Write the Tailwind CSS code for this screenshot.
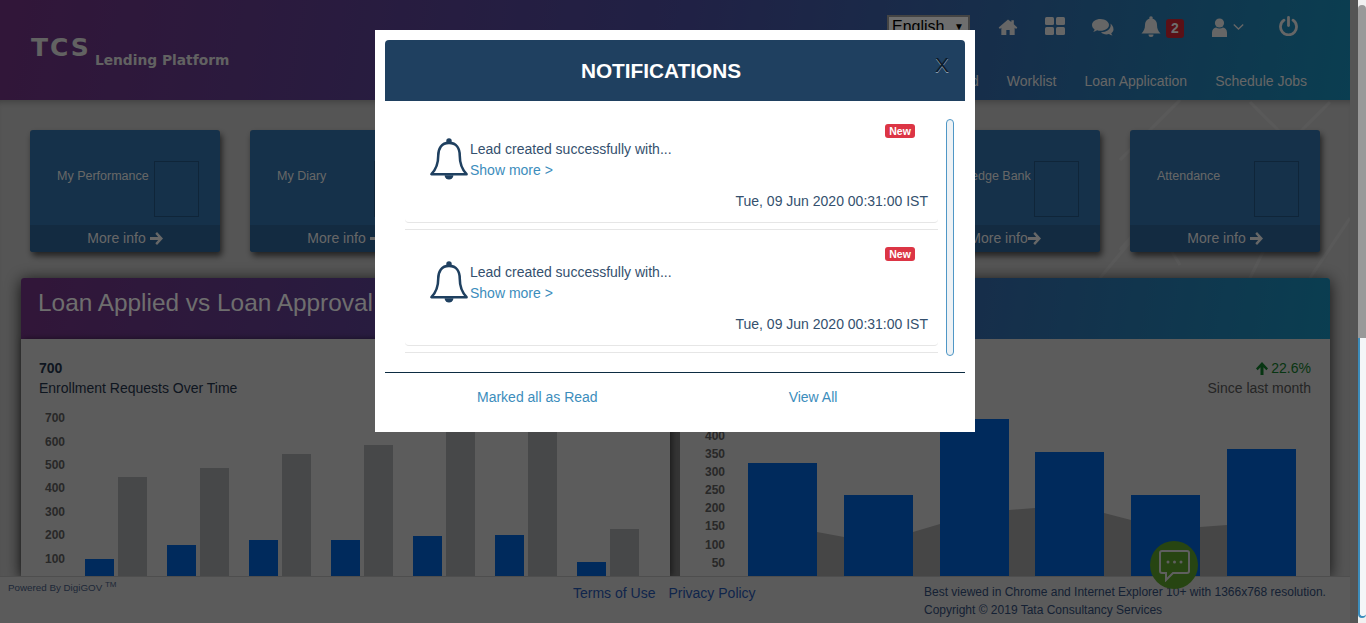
<!DOCTYPE html>
<html lang="en">
<head>
  <meta charset="UTF-8" />
  <title>Lending Platform</title>
  <script src="https://cdn.jsdelivr.net/npm/@tailwindcss/browser@4"></script>
</head>
<body class="font-['Liberation_Sans',Arial,sans-serif] text-sm overflow-hidden">
<div class="relative w-[1366px] h-[623px] overflow-hidden flex bg-[#f1f1f1]">

  <!-- Page -->
  <div class="w-[1358px] h-[623px] overflow-hidden shrink-0 bg-[#aaaaaa]">
    <div class="w-[1350px]">

      <!-- Header -->
      <header class="h-[100px] flex justify-between bg-[linear-gradient(100deg,#632c72,#41428a_50%,#157ca2)] text-[#cccccc]">
        <div class="pl-[31px] pt-[34px] flex items-start font-['DejaVu_Sans',sans-serif] font-bold text-[#c4c4c4]">
          <span class="text-[25px] leading-[28px] tracking-[2px]">TCS</span>
          <span class="text-[13.8px] leading-[16px] ml-[4px] mt-[18px]">Lending Platform</span>
        </div>
        <div class="w-[480px] pt-[15px] relative">
          <div class="flex items-start h-[46px]">
            <div class="ml-[17px] w-[83px] h-[26px] bg-[#dddddd] border-2 border-[#888888] text-[16px] leading-[20px] text-black pl-[3px] flex justify-between pr-[4px]">English <span class="text-[10px]">▼</span></div>
            <svg class="ml-[28px] mt-[2px] w-[20px] h-[20px]" viewBox="0 0 24 24" fill="currentColor"><path d="M12 3 .8 12.6l1.5 1.7L4 13v8.5h6v-6h4v6h6V13l1.7 1.3 1.5-1.7L19 8.6V4h-3v2z"/></svg>
            <svg class="ml-[27px] mt-[1px] w-[20px] h-[20px]" viewBox="0 0 20 20" fill="currentColor"><rect x="0" y="1" width="9" height="8" rx="1.5"/><rect x="11" y="1" width="9" height="8" rx="1.5"/><rect x="0" y="11" width="9" height="8" rx="1.5"/><rect x="11" y="11" width="9" height="8" rx="1.5"/></svg>
            <svg class="ml-[27px] mt-[2px] w-[22px] h-[20px]" viewBox="0 0 22 20" fill="currentColor"><path d="M8.500 2C3.800 2 0 4.600 0 8c0 1.800 1 3.300 2.600 4.400-.3 1-.9 1.900-1.600 2.600 1.600-.2 3-.8 4.100-1.700 1.100.4 2.200.5 3.400.5 4.700 0 8.500-2.600 8.500-5.800S13.200 2 8.500 2z"/><path d="M18.200 6.300c.4.600.5 1.200.5 1.900 0 4-4.300 6.900-9.700 7 1.200 1.300 3.200 2.200 5.500 2.200.9 0 1.700-.1 2.500-.4.9.8 2.200 1.300 3.500 1.500-.6-.7-1-1.500-1.300-2.300 1.400-1 2.300-2.300 2.300-3.800 0-2.500-1.400-4.600-3.300-5.900z"/></svg>
            <svg class="ml-[27px] mt-[1px] w-[20px] h-[22px]" viewBox="0 0 20 22" fill="currentColor"><circle cx="10" cy="2" r="1.800"/><path d="M10 2.500c-4 0-6 3-6 6.500 0 4-1.300 6-3.500 8.500h19C17.300 15 16 13 16 9c0-3.500-2-6.500-6-6.500z"/><path d="M7.500 18.500a2.500 2.500 0 0 0 5 0z"/></svg>
            <div class="ml-[5px] mt-[4px] w-[18px] h-[19px] rounded-[3px] bg-[#b4202c] text-[#dddddd] font-bold text-[14px] leading-[19px] text-center">2</div>
            <svg class="ml-[28px] mt-[3px] w-[15px] h-[19px]" viewBox="0 0 15 19" fill="currentColor"><circle cx="7.500" cy="5" r="4.600"/><path d="M0 19v-4.500C0 11.500 2 10 4 9.500c2 1.300 5 1.300 7 0 2 .5 4 2 4 5V19z"/></svg>
            <svg class="ml-[6px] mt-[8px] w-[11px] h-[8px]" viewBox="0 0 11 8" fill="none" stroke="currentColor" stroke-width="1.300"><path d="M.8 1.500 5.500 6l4.700-4.500"/></svg>
            <svg class="ml-[35px] mt-[1px] w-[19px] h-[20px]" viewBox="0 0 19 20" fill="none" stroke="currentColor" stroke-width="2.800" stroke-linecap="round"><path d="M9.500 1.500v8"/><path d="M5 4.200a8 8 0 1 0 9 0"/></svg>
          </div>
          <nav class="flex justify-end gap-[28px] pr-[43px] mt-[12px] text-[14px] leading-[16px]">
            <span>Dashboard</span><span>Worklist</span><span>Loan Application</span><span>Schedule Jobs</span>
          </nav>
        </div>
      </header>

      <!-- Page body -->
      <main class="relative h-[523px] bg-[#ababab] shadow-[inset_0_6px_6px_-4px_rgba(0,0,0,0.25)]">
        <svg class="absolute left-[1060px] top-0 w-[290px] h-[180px] text-white/10" viewBox="0 0 290 180" fill="none" stroke="currentColor" stroke-width="3"><path d="M120 0 60 60M190 2l40 40 40-40M60 150l30-35 30 50M40 178l50-60M190 178l30-60M250 178l40-60"/></svg>

        <!-- Tiles -->
        <div class="relative flex gap-[30px] pl-[30px] pt-[30px]">
          <div class="w-[190px] h-[122px] rounded-[3px] bg-[#2a6394] shadow-[2px_4px_6px_rgba(0,0,0,0.6)] flex flex-col text-[#cfcfcf]">
            <div class="flex-1 flex justify-between pl-[27px] pr-[21px]"><span class="text-[12.500px] leading-[16px] mt-[38px] whitespace-nowrap">My Performance</span><div class="w-[45px] h-[56px] mt-[31px] border border-[#1e4a72]"></div></div>
            <div class="h-[27px] rounded-b-[3px] bg-[#265682] text-[14px] leading-[27px] flex justify-center items-center gap-[4px]">More info
              <svg class="w-[13px] h-[13px]" viewBox="0 0 13 13" fill="currentColor"><path d="M7 0 13 6.500 7 13 5.300 11.300 8.200 8H0V5h8.200L5.300 1.700z"/></svg></div>
          </div>
          <div class="w-[190px] h-[122px] rounded-[3px] bg-[#2a6394] shadow-[2px_4px_6px_rgba(0,0,0,0.6)] flex flex-col text-[#cfcfcf]">
            <div class="flex-1 flex justify-between pl-[27px] pr-[21px]"><span class="text-[12.500px] leading-[16px] mt-[38px] whitespace-nowrap">My Diary</span><div class="w-[45px] h-[56px] mt-[31px] border border-[#1e4a72]"></div></div>
            <div class="h-[27px] rounded-b-[3px] bg-[#265682] text-[14px] leading-[27px] flex justify-center items-center gap-[4px]">More info
              <svg class="w-[13px] h-[13px]" viewBox="0 0 13 13" fill="currentColor"><path d="M7 0 13 6.500 7 13 5.300 11.300 8.200 8H0V5h8.200L5.300 1.700z"/></svg></div>
          </div>
          <div class="w-[190px] h-[122px] rounded-[3px] bg-[#2a6394]"></div>
          <div class="w-[190px] h-[122px] rounded-[3px] bg-[#2a6394]"></div>
          <div class="w-[190px] h-[122px] rounded-[3px] bg-[#2a6394] shadow-[2px_4px_6px_rgba(0,0,0,0.6)] flex flex-col text-[#cfcfcf]">
            <div class="flex-1 flex justify-between pl-[27px] pr-[21px]"><span class="text-[12.500px] leading-[16px] mt-[38px] whitespace-nowrap">Knowledge Bank</span><div class="w-[45px] h-[56px] mt-[31px] border border-[#1e4a72]"></div></div>
            <div class="h-[27px] rounded-b-[3px] bg-[#265682] text-[14px] leading-[27px] flex justify-center items-center">More info
              <svg class="w-[13px] h-[13px]" viewBox="0 0 13 13" fill="currentColor"><path d="M7 0 13 6.500 7 13 5.300 11.300 8.200 8H0V5h8.200L5.300 1.700z"/></svg></div>
          </div>
          <div class="w-[190px] h-[122px] rounded-[3px] bg-[#2a6394] shadow-[2px_4px_6px_rgba(0,0,0,0.6)] flex flex-col text-[#cfcfcf]">
            <div class="flex-1 flex justify-between pl-[27px] pr-[21px]"><span class="text-[12.500px] leading-[16px] mt-[38px] whitespace-nowrap">Attendance</span><div class="w-[45px] h-[56px] mt-[31px] border border-[#1e4a72]"></div></div>
            <div class="h-[27px] rounded-b-[3px] bg-[#265682] text-[14px] leading-[27px] flex justify-center items-center gap-[4px]">More info
              <svg class="w-[13px] h-[13px]" viewBox="0 0 13 13" fill="currentColor"><path d="M7 0 13 6.500 7 13 5.300 11.300 8.200 8H0V5h8.200L5.300 1.700z"/></svg></div>
          </div>
        </div>

        <!-- Chart panel -->
        <section class="relative ml-[21px] mt-[26px] w-[1309px] shadow-[0_2px_16px_rgba(0,0,0,0.8)] rounded-t-[3px]">
          <div class="h-[61px] rounded-t-[3px] bg-[linear-gradient(100deg,#632c72,#41428a_50%,#157ca2)] pl-[17px] pt-[11px] text-[24.400px] leading-[28px] text-[#dcdcdc]">Loan Applied vs Loan Approval</div>
          <div class="flex justify-between bg-[#6a6a6a]">

            <!-- Left chart -->
            <div class="w-[649px] h-[237px] bg-[#b8b8b8] shadow-[2px_0_6px_rgba(0,0,0,0.5)] pl-[18px] pt-[19px] text-[#1c2c40]">
              <div class="font-bold leading-[20px]">700</div>
              <div class="leading-[20px]">Enrollment Requests Over Time</div>
              <div class="h-[178px] flex items-end">
                <div class="ml-[6px] w-[20px] pb-[5px] text-[12px] font-bold text-[#505050]">
                  <div class="h-[23.4px] leading-[23.4px]">700</div>
                  <div class="h-[23.4px] leading-[23.4px]">600</div>
                  <div class="h-[23.4px] leading-[23.4px]">500</div>
                  <div class="h-[23.4px] leading-[23.4px]">400</div>
                  <div class="h-[23.4px] leading-[23.4px]">300</div>
                  <div class="h-[23.4px] leading-[23.4px]">200</div>
                  <div class="h-[23.4px] leading-[23.4px]">100</div>
                </div>
                <div class="ml-[20px] flex items-end gap-[20px]">
                  <div class="flex items-end gap-[4px]"><div class="w-[29px] h-[17px] bg-[#0054b8]"></div><div class="w-[29px] h-[99px] bg-[#8e9093]"></div></div>
                  <div class="flex items-end gap-[4px]"><div class="w-[29px] h-[31px] bg-[#0054b8]"></div><div class="w-[29px] h-[108px] bg-[#8e9093]"></div></div>
                  <div class="flex items-end gap-[4px]"><div class="w-[29px] h-[36px] bg-[#0054b8]"></div><div class="w-[29px] h-[122px] bg-[#8e9093]"></div></div>
                  <div class="flex items-end gap-[4px]"><div class="w-[29px] h-[36px] bg-[#0054b8]"></div><div class="w-[29px] h-[131px] bg-[#8e9093]"></div></div>
                  <div class="flex items-end gap-[4px]"><div class="w-[29px] h-[40px] bg-[#0054b8]"></div><div class="w-[29px] h-[150px] bg-[#8e9093]"></div></div>
                  <div class="flex items-end gap-[4px]"><div class="w-[29px] h-[41px] bg-[#0054b8]"></div><div class="w-[29px] h-[150px] bg-[#8e9093]"></div></div>
                  <div class="flex items-end gap-[4px]"><div class="w-[29px] h-[14px] bg-[#0054b8]"></div><div class="w-[29px] h-[47px] bg-[#8e9093]"></div></div>
                </div>
              </div>
            </div>

            <!-- Right chart -->
            <div class="relative w-[650px] h-[237px] bg-[#b8b8b8] pr-[19px] pt-[19px] text-[#1c2c40]">
              <svg class="absolute left-0 bottom-0 w-[650px] h-[178px]" viewBox="680 398 650 178"><polygon fill="#8c8c8c" points="800,576 800,530 817,532 844,537 913,532 940,524 1009,510 1035,508 1104,513 1131,520 1200,527 1227,525 1240,576" /></svg>
              <div class="relative text-right">
                <div class="leading-[20px] text-[#0f6a24] flex justify-end items-center gap-[3px]">
                  <svg class="w-[12px] h-[13px]" viewBox="0 0 12 13" fill="currentColor"><path d="M6 0 12 6.500 10.300 8.200 7.500 5.300V13h-3V5.300L1.700 8.200 0 6.500z"/></svg>22.6%</div>
                <div class="leading-[20px] text-[#4a4a4a]">Since last month</div>
              </div>
              <div class="relative h-[178px] flex items-end">
                <div class="ml-[25px] w-[20px] pb-[4px] text-[12px] font-bold text-[#505050] text-right">
                  <div class="h-[18.2px] leading-[18.2px]">400</div>
                  <div class="h-[18.2px] leading-[18.2px]">350</div>
                  <div class="h-[18.2px] leading-[18.2px]">300</div>
                  <div class="h-[18.2px] leading-[18.2px]">250</div>
                  <div class="h-[18.2px] leading-[18.2px]">200</div>
                  <div class="h-[18.2px] leading-[18.2px]">150</div>
                  <div class="h-[18.2px] leading-[18.2px]">100</div>
                  <div class="h-[18.2px] leading-[18.2px]">50</div>
                </div>
                <div class="ml-[23px] flex items-end gap-[26.800px]">
                  <div class="w-[69px] h-[113px] bg-[#0054b8]"></div>
                  <div class="w-[69px] h-[81px] bg-[#0054b8]"></div>
                  <div class="w-[69px] h-[157px] bg-[#0054b8]"></div>
                  <div class="w-[69px] h-[124px] bg-[#0054b8]"></div>
                  <div class="w-[69px] h-[81px] bg-[#0054b8]"></div>
                  <div class="w-[69px] h-[127px] bg-[#0054b8]"></div>
                </div>
              </div>
            </div>
          </div>
        </section>

        <!-- Footer -->
        <footer class="absolute left-0 bottom-0 w-[1350px] h-[47px] bg-[#b6b6b6] border-t border-[#9c9c9c] text-[#25497f] flex">
          <div class="w-[565px] pl-[8px] pt-[5px] text-[9.800px] leading-[12px] text-[#3c5070]">Powered By DigiGOV <sup class="text-[8px]">TM</sup></div>
          <div class="w-[351px] pl-[8px] pt-[8px] text-[14px] leading-[16px] text-[#1e4a96] flex gap-[13px]"><span>Terms of Use</span><span>Privacy Policy</span></div>
          <div class="pl-[8px] pt-[6px] text-[12px] leading-[18px] text-[#2b4268]">
            <div>Best viewed in Chrome and Internet Explorer 10+ with 1366x768 resolution.</div>
            <div>Copyright © 2019 Tata Consultancy Services</div>
          </div>
        </footer>

        <!-- Chat button -->
        <div class="absolute left-[1150px] top-[441px] w-[48px] h-[48px] rounded-full bg-[#4f8a24] flex items-center justify-center">
          <svg class="w-[33px] h-[33px] text-[#bfbfbf]" viewBox="0 0 33 33" fill="none" stroke="currentColor" stroke-width="2"><path d="M4 2h25a2 2 0 0 1 2 2v18a2 2 0 0 1-2 2H15l-7 7v-7H4a2 2 0 0 1-2-2V4a2 2 0 0 1 2-2z"/><circle cx="10" cy="13" r="1.500" fill="currentColor" stroke="none"/><circle cx="16.500" cy="13" r="1.500" fill="currentColor" stroke="none"/><circle cx="23" cy="13" r="1.500" fill="currentColor" stroke="none"/></svg>
        </div>
      </main>
    </div>
  </div>

  <!-- Browser scrollbar -->
  <div class="w-[8px] h-[618px] flex flex-col">
    <div class="h-[333px] rounded-t-full bg-[#999999] mt-[5px]"></div>
    <div class="flex-1 bg-[#f4f6f8] border-2 border-t-0 border-r-0 border-[#3c8dbc] rounded-b-[6px]"></div>
  </div>

  <!-- Backdrop -->
  <div class="absolute left-0 top-0 w-[1358px] h-[623px] bg-black/50"></div>

  <!-- Notifications modal -->
  <div class="absolute left-[375px] top-[30px] w-[600px] h-[402px] bg-white p-[10px]">
    <div class="relative h-[61px] rounded-t-[4px] bg-[#1f4060] flex items-center justify-center pr-[28px] text-white text-[20.800px] font-bold">
      NOTIFICATIONS
      <span class="absolute left-[550px] top-[13px] text-[21px] font-normal leading-[24px] text-[#0c1c2c] [text-shadow:0_1px_0_rgba(255,255,255,0.5)]">X</span>
    </div>

    <div class="relative h-[272px] border-b border-[#0c2c42] pl-[20px] pt-[6px]">
      <div class="w-[533px]">
        <div class="h-[116px] rounded-b-[4px] border-b border-[#e6e6e6] text-[#34506e]">
          <div class="flex justify-end pr-[23px] pt-[17px]"><span class="w-[30px] h-[14px] rounded-[3px] bg-[#dc3545] text-white font-bold text-[10.500px] leading-[14px] text-center">New</span></div>
          <div class="flex">
            <svg class="ml-[24px] w-[40px] h-[43px]" viewBox="0 0 40 44" fill="none" stroke="#1f4060" stroke-width="2.600"><path d="M20 5C12 5 9 11 9 18c0 9-2 14-7 19h36c-5-5-7-10-7-19 0-7-3-13-11-13z" stroke-linejoin="round"/><circle cx="20" cy="3" r="1.500" fill="#1f4060"/><path d="M15.500 38a4.500 4.500 0 0 0 9 0z" fill="#1f4060" stroke="none"/></svg>
            <div class="ml-[1px] pt-[1px] leading-[21px]">
              <div>Lead created successfully with...</div>
              <div class="text-[#3c8dbc]">Show more &gt;</div>
            </div>
          </div>
          <div class="text-right pr-[10px] mt-[10px] leading-[20px]">Tue, 09 Jun 2020 00:31:00 IST</div>
        </div>
        <div class="mt-[6px] h-px bg-[#e6e6e6]"></div>
        <div class="h-[116px] rounded-b-[4px] border-b border-[#e6e6e6] text-[#34506e]">
          <div class="flex justify-end pr-[23px] pt-[17px]"><span class="w-[30px] h-[14px] rounded-[3px] bg-[#dc3545] text-white font-bold text-[10.500px] leading-[14px] text-center">New</span></div>
          <div class="flex">
            <svg class="ml-[24px] w-[40px] h-[43px]" viewBox="0 0 40 44" fill="none" stroke="#1f4060" stroke-width="2.600"><path d="M20 5C12 5 9 11 9 18c0 9-2 14-7 19h36c-5-5-7-10-7-19 0-7-3-13-11-13z" stroke-linejoin="round"/><circle cx="20" cy="3" r="1.500" fill="#1f4060"/><path d="M15.500 38a4.500 4.500 0 0 0 9 0z" fill="#1f4060" stroke="none"/></svg>
            <div class="ml-[1px] pt-[1px] leading-[21px]">
              <div>Lead created successfully with...</div>
              <div class="text-[#3c8dbc]">Show more &gt;</div>
            </div>
          </div>
          <div class="text-right pr-[10px] mt-[10px] leading-[20px]">Tue, 09 Jun 2020 00:31:00 IST</div>
        </div>
        <div class="mt-[6px] h-px bg-[#e6e6e6]"></div>
      </div>
      <div class="absolute left-[561px] top-[18px] w-[8px] h-[237px] rounded-full border border-[#4f97c6] bg-[#eef2f5]"></div>
    </div>

    <div class="flex pt-[14px] text-[14px] leading-[20px] text-[#3c8dbc]">
      <span class="ml-[92px]">Marked all as Read</span>
      <span class="ml-[191px]">View All</span>
    </div>
  </div>
</div>
</body>
</html>
